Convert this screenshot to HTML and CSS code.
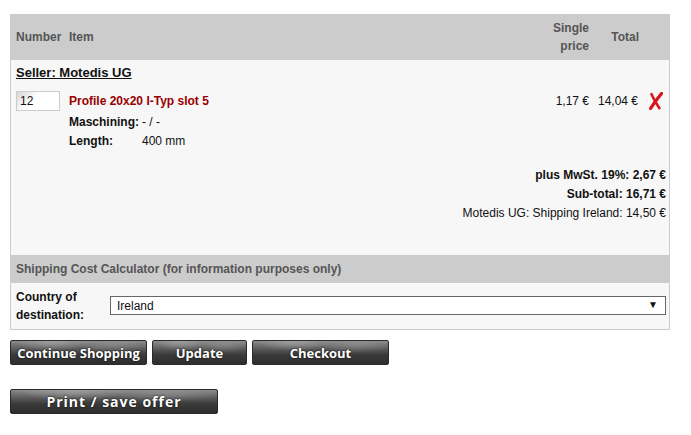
FILE: index.html
```html
<!DOCTYPE html>
<html lang="en">
<head>
  <meta charset="UTF-8">
  <title>Shopping Cart</title>
  <meta name="viewport" content="width=device-width, initial-scale=1.0">
  <link rel="stylesheet" href="styles.css">
</head>
<body>

<!-- Cart table -->
<div class="cart">
  <div class="cart-head">
    <div class="col-num">Number</div>
    <div class="col-item">Item</div>
    <div class="col-price">Single<br>price</div>
    <div class="col-total">Total</div>
    <div class="col-del"></div>
  </div>

  <div class="cart-body">
    <div class="seller">Seller: Motedis UG</div>

    <div class="cart-row">
      <div class="col-num"><input class="qty" type="text" value="12"></div>
      <div class="col-item">
        <div class="product">Profile 20x20 I-Typ slot 5</div>
        <div class="attrs">
          <span class="attr-name">Maschining:</span><span>- / -</span>
          <span class="attr-name">Length:</span><span>400 mm</span>
        </div>
      </div>
      <div class="col-price">1,17 €</div>
      <div class="col-total">14,04 €</div>
      <div class="col-del">
        <svg class="del-icon" width="14" height="18" viewBox="0 0 14 18">
          <path d="M2.5 2.2 C4.2 6 6.6 10.5 10.4 16.2" stroke="#d8141c" stroke-width="2.6" fill="none" stroke-linecap="round"/>
          <path d="M12.6 1.4 C9 5.8 5.2 10.6 1.6 16.4" stroke="#d8141c" stroke-width="3.2" fill="none" stroke-linecap="round"/>
        </svg>
      </div>
    </div>

    <div class="totals">
      <div class="sum">plus MwSt. 19%: 2,67 €</div>
      <div class="sum">Sub-total: 16,71 €</div>
      <div>Motedis UG: Shipping Ireland: 14,50 €</div>
    </div>
  </div>

  <!-- Shipping calculator -->
  <div class="calc-head">Shipping Cost Calculator (for information purposes only)</div>
  <div class="calc-row">
    <div class="calc-label">Country of<br>destination:</div>
    <div class="select-wrap">
      <select class="country">
        <option>Ireland</option>
      </select>
      <span class="select-arrow">▼</span>
    </div>
  </div>
</div>

<div class="actions">
  <button class="btn btn-wide">Continue Shopping</button>
  <button class="btn btn-small">Update</button>
  <button class="btn btn-wide">Checkout</button>
</div>

<div class="actions actions-print">
  <button class="btn btn-print">Print / save offer</button>
</div>

</body>
</html>
```

FILE: styles.css
```css
/* Global styles */
body {
  font-family: 'Liberation Sans', Arial, sans-serif;
  font-size: 12px;
  margin: 0;
  padding: 14px 21px 0 10px;
  background: #fff;
  color: #111;
}

/* Cart box */
.cart {
  width: 658px;
  border: 1px solid #ccc;
  border-top: none;
  background: #f7f7f7;
}

.cart-head {
  display: flex;
  align-items: center;
  height: 46px;
  background: #ccc;
  color: #555;
  font-weight: bold;
  line-height: 18px;
}

.col-num {
  width: 47px;
  padding-left: 5px;
  flex-shrink: 0;
}

.col-item {
  flex: 1;
  padding-left: 6px;
}

.col-price {
  width: 70px;
  padding-right: 6px;
  text-align: right;
}

.col-total {
  width: 44px;
  padding-right: 6px;
  text-align: right;
}

.col-del {
  width: 20px;
  padding-left: 4px;
}

.cart-body {
  padding: 4px 0 32px;
}

.seller {
  padding-left: 5px;
  font-size: 13px;
  font-weight: bold;
  line-height: 18px;
  text-decoration: underline;
  margin-bottom: 9px;
}

.cart-row {
  display: flex;
  align-items: flex-start;
  line-height: 19px;
}

.cart-row .col-price,
.cart-row .col-total {
  padding-top: 1px;
}

.cart-row .col-total {
  padding-right: 7px;
  width: 43px;
}

.qty {
  width: 36px;
  height: 14px;
  padding: 2px 3px;
  margin: 0;
  border: 1px solid #ccc;
  background: linear-gradient(135deg, #d6d6d6 0%, #fff 40%);
  font-family: 'Liberation Sans', Arial, sans-serif;
  font-size: 12px;
  color: #111;
  display: block;
}

.product {
  color: #990000;
  font-weight: bold;
  padding-top: 1px;
  margin-bottom: 2px;
}

.attrs {
  display: grid;
  grid-template-columns: 73px auto;
}

.attr-name {
  font-weight: bold;
}

.del-icon {
  display: block;
  margin-top: 1px;
}

.totals {
  margin-top: 15px;
  padding-right: 3px;
  text-align: right;
  line-height: 19px;
}

.sum {
  font-weight: bold;
}

/* Shipping calculator */
.calc-head {
  height: 28px;
  line-height: 28px;
  padding-left: 5px;
  background: #ccc;
  color: #555;
  font-weight: bold;
}

.calc-row {
  display: flex;
  align-items: center;
  height: 46px;
  padding: 0 3px 0 5px;
}

.calc-label {
  width: 94px;
  font-weight: bold;
  line-height: 18px;
}

.select-wrap {
  flex: 1;
  position: relative;
}

.country {
  display: block;
  width: 100%;
  height: 19px;
  margin: -1px 0 0;
  padding: 0 0 0 6px;
  border: 1px solid #666;
  border-radius: 0;
  background: #fff;
  appearance: none;
  -webkit-appearance: none;
  font-family: 'Liberation Sans', Arial, sans-serif;
  font-size: 12px;
  color: #111;
}

.select-arrow {
  position: absolute;
  right: 8px;
  top: 2px;
  font-size: 10px;
  color: #111;
  pointer-events: none;
}

/* Buttons */
.actions {
  display: flex;
  gap: 5px;
  margin-top: 10px;
}

.actions-print {
  margin-top: 24px;
}

.btn {
  height: 25px;
  padding: 0;
  border: 1px solid #2a2a2a;
  border-radius: 2px;
  color: #fff;
  font-family: 'Open Sans', 'DejaVu Sans', sans-serif;
  font-weight: bold;
  font-size: 13px;
  text-shadow: 0 0 2px #000;
  background:
    radial-gradient(ellipse 40% 60% at 30% 0%, rgba(170,170,170,0.7), rgba(170,170,170,0) 70%),
    radial-gradient(ellipse 40% 60% at 75% 10%, rgba(150,150,150,0.6), rgba(150,150,150,0) 70%),
    linear-gradient(#8a8a8a 0%, #5a5a5a 35%, #3a3a3a 60%, #2e2e2e 100%);
  cursor: pointer;
}

.btn-wide {
  width: 137px;
}

.btn-small {
  width: 95px;
}

.btn-print {
  width: 208px;
  letter-spacing: 1px;
  font-size: 14px;
}
```
